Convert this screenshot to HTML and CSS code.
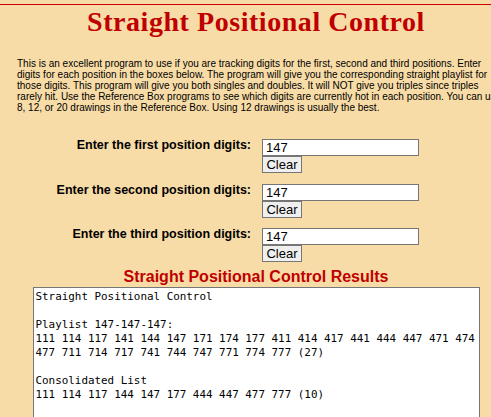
FILE: index.html
```html
<!DOCTYPE html>
<html>
<head>
<meta charset="utf-8">
<title>Straight Positional Control</title>
<link rel="stylesheet" href="styles.css">
</head>
<body>
<div class="topline"></div>
<div class="page">
  <h1 class="title">Straight Positional Control</h1>
  <p class="intro">This is an excellent program to use if you are tracking digits for the first, second and third positions. Enter digits for each position in the boxes below. The program will give you the corresponding straight playlist for those digits. This program will give you both singles and doubles. It will NOT give you triples since triples rarely hit. Use the Reference Box programs to see which digits are currently hot in each position. You can use 8, 12, or 20 drawings in the Reference Box. Using 12 drawings is usually the best.</p>
  <div class="form">
    <div class="label">Enter the first position digits:</div>
    <div class="field">
      <input class="digits" type="text" value="147">
      <button class="clear" type="button">Clear</button>
    </div>
    <div class="label">Enter the second position digits:</div>
    <div class="field">
      <input class="digits" type="text" value="147">
      <button class="clear" type="button">Clear</button>
    </div>
    <div class="label">Enter the third position digits:</div>
    <div class="field">
      <input class="digits" type="text" value="147">
      <button class="clear" type="button">Clear</button>
    </div>
  </div>
  <h2 class="results-title">Straight Positional Control Results</h2>
  <textarea class="results" spellcheck="false">Straight Positional Control

Playlist 147-147-147:
111 114 117 141 144 147 171 174 177 411 414 417 441 444 447 471 474 477 711 714 717 741 744 747 771 774 777 (27)

Consolidated List
111 114 117 144 147 177 444 447 477 777 (10)</textarea>
</div>
</body>
</html>
```

FILE: styles.css
```css
html, body {
  margin: 0;
  padding: 0;
  background: #f8dca7;
  overflow: hidden;
}

body {
  font-family: "Liberation Sans", Arial, sans-serif;
  color: #000;
}

.topline {
  margin-top: 4px;
  border-top: 1px solid #cc0000;
}

.page {
  margin-left: 8px;
  width: 496px;
  display: flex;
  flex-direction: column;
  align-items: center;
}

.title {
  margin: 1px 0 0 0;
  font-family: "Liberation Serif", "Times New Roman", serif;
  font-weight: bold;
  font-size: 28px;
  line-height: 32px;
  letter-spacing: 0.55px;
  color: #c00000;
  text-align: center;
}

.intro {
  align-self: stretch;
  margin: 20px 0 0 0;
  padding: 0 0 0 9px;
  font-size: 10px;
  line-height: 11.1px;
}

.form {
  align-self: stretch;
  margin-top: 26px;
  display: grid;
  grid-template-columns: 243px 157px;
  column-gap: 11px;
  row-gap: 10.5px;
}

.label {
  text-align: right;
  font-weight: bold;
  font-size: 12.5px;
  line-height: 13px;
  white-space: nowrap;
}

.field {
  display: flex;
  flex-direction: column;
  align-items: flex-start;
  gap: 0;
}

.digits {
  box-sizing: border-box;
  width: 157px;
  height: 17px;
  margin: 0;
  padding: 0 3px;
  border: 1px solid #767676;
  background: #fff;
  font-family: "Liberation Sans", Arial, sans-serif;
  font-size: 13px;
  color: #000;
}

.clear {
  box-sizing: border-box;
  width: 40px;
  height: 17px;
  margin: 0;
  padding: 0;
  border: 1px solid #767676;
  border-radius: 0;
  background: #efefef;
  font-family: "Liberation Sans", Arial, sans-serif;
  font-size: 13px;
  line-height: 15px;
  color: #000;
}

.results-title {
  margin: 6px 0 0 0;
  font-size: 16px;
  line-height: 18px;
  font-weight: bold;
  color: #c00000;
  text-align: center;
}

.results {
  box-sizing: border-box;
  margin-top: 1px;
  width: 447px;
  height: 170px;
  padding: 2px 0 2px 2px;
  border: 1px solid #767676;
  background: #fff;
  font-family: "DejaVu Sans Mono", "Liberation Mono", monospace;
  font-size: 10.9px;
  line-height: 14px;
  color: #000;
  resize: none;
  overflow: hidden;
}
```
